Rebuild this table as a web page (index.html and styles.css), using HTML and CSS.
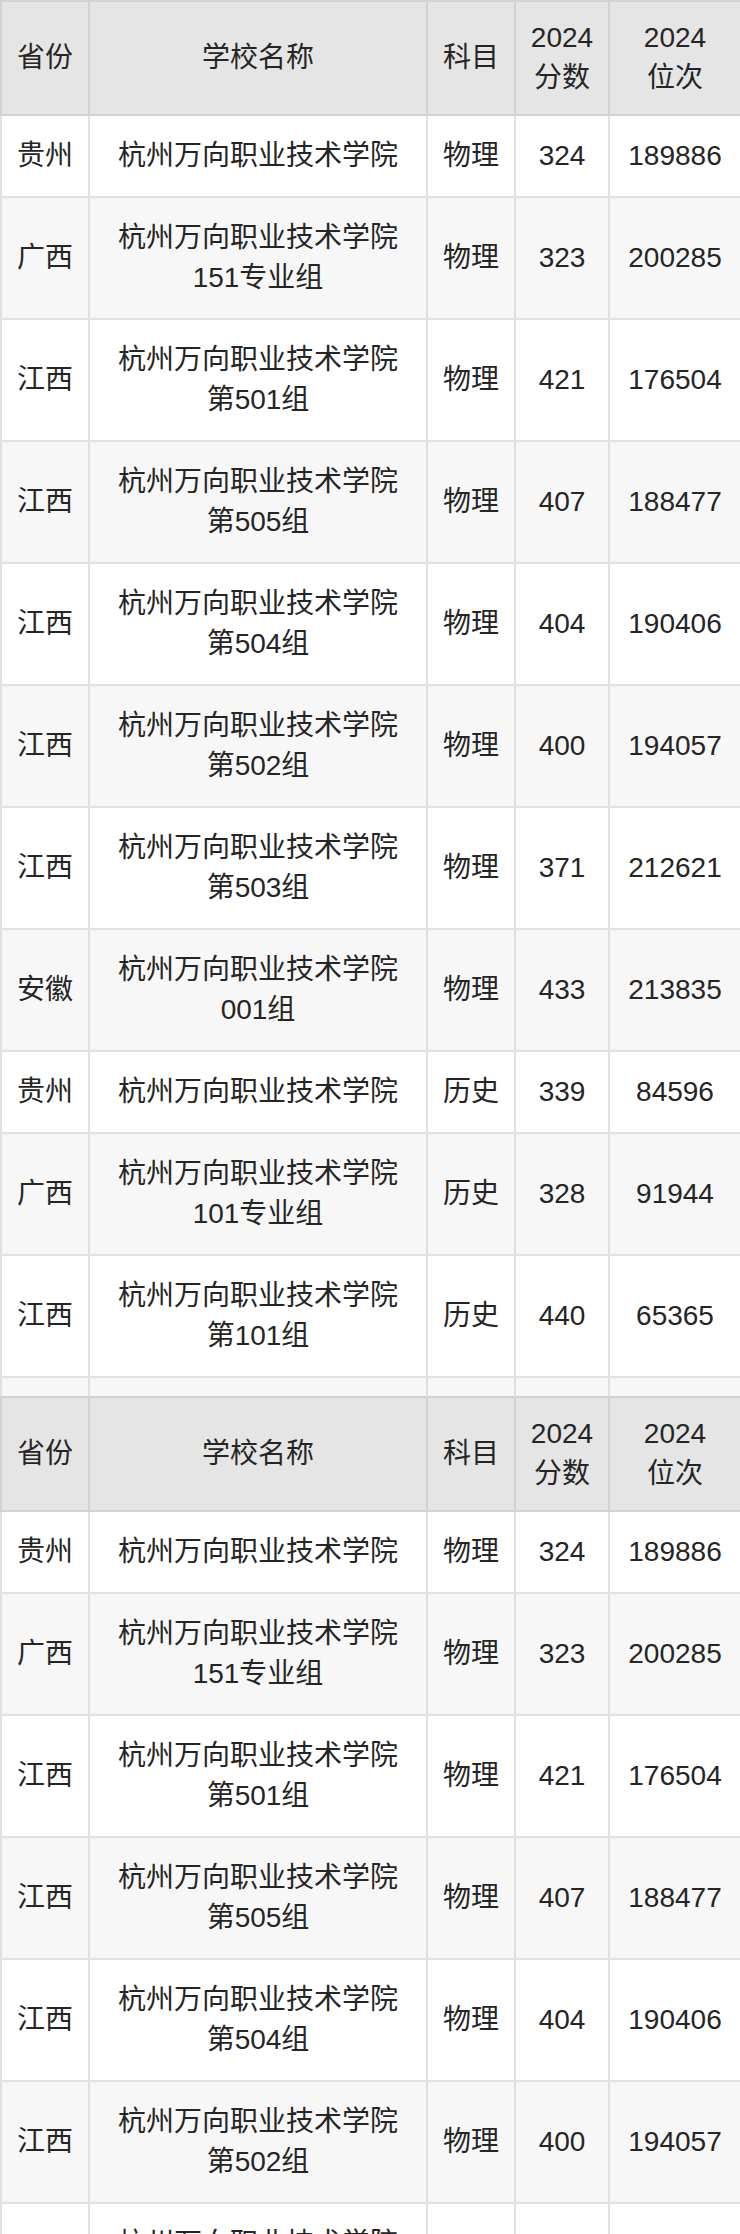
FILE: index.html
```html
<!DOCTYPE html>
<html lang="zh-CN">
<head>
<meta charset="utf-8">
<title>杭州万向职业技术学院 分数线</title>
<link rel="stylesheet" href="styles.css">
</head>
<body>
<table class="score-table">
  <colgroup>
    <col class="c-prov"><col class="c-school"><col class="c-subj"><col class="c-score"><col class="c-rank">
  </colgroup>
  <tbody class="block first">
    <tr class="head">
      <th>省份</th><th>学校名称</th><th>科目</th><th>2024<br>分数</th><th>2024<br>位次</th>
    </tr>
    <tr><td>贵州</td><td>杭州万向职业技术学院</td><td>物理</td><td>324</td><td>189886</td></tr>
    <tr><td>广西</td><td>杭州万向职业技术学院<br>151专业组</td><td>物理</td><td>323</td><td>200285</td></tr>
    <tr><td>江西</td><td>杭州万向职业技术学院<br>第501组</td><td>物理</td><td>421</td><td>176504</td></tr>
    <tr><td>江西</td><td>杭州万向职业技术学院<br>第505组</td><td>物理</td><td>407</td><td>188477</td></tr>
    <tr><td>江西</td><td>杭州万向职业技术学院<br>第504组</td><td>物理</td><td>404</td><td>190406</td></tr>
    <tr><td>江西</td><td>杭州万向职业技术学院<br>第502组</td><td>物理</td><td>400</td><td>194057</td></tr>
    <tr><td>江西</td><td>杭州万向职业技术学院<br>第503组</td><td>物理</td><td>371</td><td>212621</td></tr>
    <tr><td>安徽</td><td>杭州万向职业技术学院<br>001组</td><td>物理</td><td>433</td><td>213835</td></tr>
    <tr><td>贵州</td><td>杭州万向职业技术学院</td><td>历史</td><td>339</td><td>84596</td></tr>
    <tr><td>广西</td><td>杭州万向职业技术学院<br>101专业组</td><td>历史</td><td>328</td><td>91944</td></tr>
    <tr><td>江西</td><td>杭州万向职业技术学院<br>第101组</td><td>历史</td><td>440</td><td>65365</td></tr>
    <tr class="spacer"><td></td><td></td><td></td><td></td><td></td></tr>
  </tbody>
  <tbody class="block">
    <tr class="head">
      <th>省份</th><th>学校名称</th><th>科目</th><th>2024<br>分数</th><th>2024<br>位次</th>
    </tr>
    <tr><td>贵州</td><td>杭州万向职业技术学院</td><td>物理</td><td>324</td><td>189886</td></tr>
    <tr><td>广西</td><td>杭州万向职业技术学院<br>151专业组</td><td>物理</td><td>323</td><td>200285</td></tr>
    <tr><td>江西</td><td>杭州万向职业技术学院<br>第501组</td><td>物理</td><td>421</td><td>176504</td></tr>
    <tr><td>江西</td><td>杭州万向职业技术学院<br>第505组</td><td>物理</td><td>407</td><td>188477</td></tr>
    <tr><td>江西</td><td>杭州万向职业技术学院<br>第504组</td><td>物理</td><td>404</td><td>190406</td></tr>
    <tr><td>江西</td><td>杭州万向职业技术学院<br>第502组</td><td>物理</td><td>400</td><td>194057</td></tr>
    <tr><td>江西</td><td>杭州万向职业技术学院<br>第503组</td><td>物理</td><td>371</td><td>212621</td></tr>
    <tr><td>安徽</td><td>杭州万向职业技术学院<br>001组</td><td>物理</td><td>433</td><td>213835</td></tr>
  </tbody>
</table>
</body>
</html>
```
FILE: styles.css
```css
html, body {
  margin: 0;
  padding: 0;
  background: #ffffff;
  overflow: hidden;
}

.score-table {
  width: 742px;
  table-layout: fixed;
  border-collapse: separate;
  border-spacing: 0;
  font-family: "Liberation Sans", "Noto Sans CJK SC", sans-serif;
  font-size: 28px;
  line-height: 40px;
  color: #252525;
}

.c-prov { width: 90px; }
.c-school { width: 338px; }
.c-subj { width: 88px; }
.c-score { width: 94px; }
.c-rank { width: 132px; }

.score-table th,
.score-table td {
  text-align: center;
  vertical-align: middle;
  font-weight: normal;
  padding: 20px 4px;
  border-right: 2px solid #e0e0e0;
  border-bottom: 2px solid #e0e0e0;
}

.score-table th:first-child,
.score-table td:first-child {
  border-left: 2px solid #e0e0e0;
}

.score-table .head th {
  background: #e5e5e5;
  padding: 16px 4px;
  border-right-color: #d2d2d2;
  border-bottom-color: #d2d2d2;
}

.score-table .head th:first-child {
  border-left-color: #d2d2d2;
}

.first .head th {
  border-top: 2px solid #d2d2d2;
}

.block tr:nth-child(odd):not(.head) td {
  background: #f7f7f7;
}

.score-table .spacer td {
  height: 18px;
  padding: 0;
  line-height: 0;
  font-size: 0;
  border-bottom-color: #d2d2d2;
  background: #f5f5f5;
}
```
